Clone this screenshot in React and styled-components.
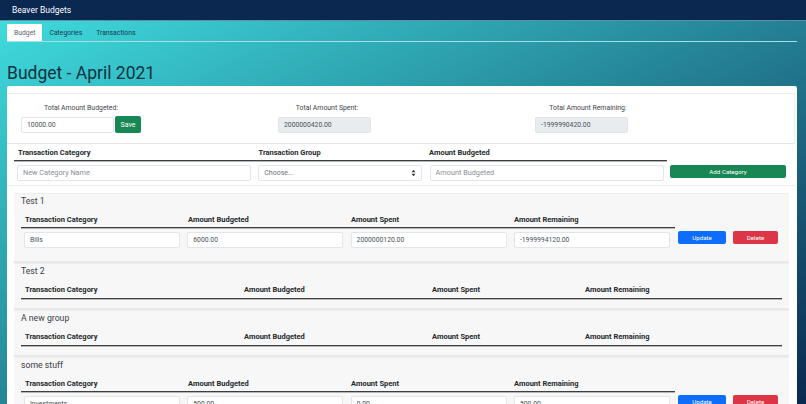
import styled, { createGlobalStyle } from "styled-components";

const GlobalStyle = createGlobalStyle`
  html, body {
    margin: 0;
    height: 100%;
    overflow: hidden;
  }
  body {
    background: linear-gradient(to bottom right, #40e0e0, #0a2850) fixed;
    font-family: Roboto, "Noto Sans", sans-serif;
    color: #212529;
  }
  * { box-sizing: border-box; }
`;

const NavBar = styled.header`
  height: 21px;
  padding: 0 12px;
  display: flex;
  align-items: center;
  background: #0a2850;
  border-bottom: 1px solid #5f8fa8;
  color: #fff;
  font-size: 8.5px;
`;

const Page = styled.main`
  padding: 3px 9px 0 7px;
`;

const Tabs = styled.nav`
  display: flex;
  height: 18px;
  border-bottom: 1px solid #a6dfe2;
`;

const Tab = styled.a`
  padding: 0 7px;
  display: flex;
  align-items: center;
  font-size: 6.8px;
  color: ${(p) => (p.$active ? "#5c636a" : "#16384f")};
  background: ${(p) => (p.$active ? "#fff" : "transparent")};
`;

const Title = styled.h1`
  margin: 19px 0 0;
  height: 25px;
  line-height: 25px;
  font-size: 17.5px;
  font-weight: 400;
  color: #10323f;
`;

const Card = styled.section`
  background: #fff;
  padding: 7px 2px 0 0;
  border-radius: 2px;
`;

const Summary = styled.div`
  height: 51px;
  padding-left: 14px;
  display: flex;
  border-top: 1px solid #eceeee;
  border-bottom: 1px solid #e6e8e8;
  border-right: 1px solid #eceeee;
`;

const Stat = styled.div`
  width: 257px;
  padding-top: 8px;
`;

const StatLabel = styled.div`
  width: ${(p) => p.$w}px;
  height: 12px;
  line-height: 12px;
  margin-bottom: 3px;
  font-size: 6.9px;
  text-align: center;
  white-space: nowrap;
  color: #3f4549;
`;

const StatRow = styled.div`
  display: flex;
  align-items: flex-start;
`;

const Field = styled.input`
  display: block;
  width: 100%;
  height: 16px;
  padding: 0 5px;
  border: 1px solid #e3e6e8;
  border-radius: 2px;
  background: ${(p) => (p.disabled ? "#e9ecef" : "#fff")};
  color: #4a5056;
  font-family: inherit;
  font-size: 6.8px;
  outline: none;
  opacity: 1;
  &::placeholder { color: #8a9096; opacity: 1; font-size: 7.3px; }
`;

const StatField = styled(Field)`
  width: 93px;
`;

const Button = styled.button`
  border: 0;
  padding: 0;
  border-radius: 2px;
  width: ${(p) => p.$w}px;
  height: 13px;
  color: #fff;
  font-family: inherit;
  font-size: 6.2px;
  background: ${(p) => p.$bg};
`;

const SaveButton = styled(Button)`
  height: 17px;
  margin-left: 1px;
  margin-top: -1px;
  font-size: 7px;
`;

const NewCategory = styled.div`
  display: grid;
  grid-template-columns: 653px 1fr;
  padding: 0 8px 0 7px;
  border-bottom: 1px solid #eceeee;
  height: 42px;
`;

const HeadRow = styled.div`
  display: grid;
  grid-template-columns: ${(p) => p.$cols};
  height: ${(p) => p.$h || 17}px;
  padding-bottom: ${(p) => (p.$h ? 1 : 0)}px;
  align-items: center;
  border-bottom: 1px solid #3c3f42;
  box-shadow: 0 1px 0 #b4b7b9;
`;

const Head = styled.div`
  padding-left: 4px;
  font-size: 7.5px;
  font-weight: 700;
  color: #24282b;
  white-space: nowrap;
`;

const InputRow = styled.div`
  display: grid;
  grid-template-columns: ${(p) => p.$cols};
  gap: 0 7.3px;
  padding: 4px 0 0 3px;
`;

const SelectBox = styled.div`
  height: 16px;
  padding: 0 5px;
  border: 1px solid #e3e6e8;
  border-radius: 2px;
  display: flex;
  align-items: center;
  justify-content: space-between;
  font-size: 7px;
  color: #6c7378;
`;

const AddButton = styled(Button)`
  margin: 21px 0 0 3px;
`;

const Group = styled.article`
  margin: 7px 7px 0;
  width: 775px;
  background: #f7f7f7;
  border-top: 1px solid #eeeeee;
  border-bottom: 2px solid #e8e8e8;
  padding: 0 7px;
  height: ${(p) => p.$h}px;
  & + & { margin-top: 0; }
`;

const GroupTitle = styled.h2`
  margin: 0;
  height: 17px;
  line-height: 15px;
  font-size: 8.7px;
  font-weight: 400;
  color: #3c4144;
`;

const CategoryGrid = styled.div`
  display: grid;
  grid-template-columns: 654px 1fr;
`;

const Actions = styled.div`
  display: flex;
  justify-content: space-between;
  width: 100px;
  margin: 20px 0 0 3px;
`;

const COLS = "163px 163px 163px 165px";
const NEW_COLS = "240.5px 170.5px 1fr";
const WIDE_COLS = "219px 188px 153px 1fr";

const CategoryHead = ({ wide }) => (
  <HeadRow $cols={wide ? WIDE_COLS : COLS} $h={wide ? 18 : undefined}>
    <Head>Transaction Category</Head>
    <Head>Amount Budgeted</Head>
    <Head>Amount Spent</Head>
    <Head>Amount Remaining</Head>
  </HeadRow>
);

const FilledGroup = ({ title, h, values }) => (
  <Group $h={h}>
    <GroupTitle>{title}</GroupTitle>
    <CategoryGrid>
      <div>
        <CategoryHead />
        <InputRow $cols="repeat(4, 156px)">
          {values.map((v) => (
            <Field key={v} defaultValue={v} />
          ))}
        </InputRow>
      </div>
      <Actions>
        <Button $bg="#0d6efd" $w={48}>Update</Button>
        <Button $bg="#dc3545" $w={45}>Delete</Button>
      </Actions>
    </CategoryGrid>
  </Group>
);

const EmptyGroup = ({ title }) => (
  <Group $h={47}>
    <GroupTitle>{title}</GroupTitle>
    <CategoryHead wide />
  </Group>
);

export default function App() {
  return (
    <>
      <GlobalStyle />
      <NavBar>Beaver Budgets</NavBar>
      <Page>
        <Tabs>
          <Tab $active>Budget</Tab>
          <Tab>Categories</Tab>
          <Tab>Transactions</Tab>
        </Tabs>
        <Title>Budget - April 2021</Title>
        <Card>
          <Summary>
            <Stat>
              <StatLabel $w={120}>Total Amount Budgeted:</StatLabel>
              <StatRow>
                <StatField defaultValue="10000.00" />
                <SaveButton $bg="#198754" $w={26}>Save</SaveButton>
              </StatRow>
            </Stat>
            <Stat>
              <StatLabel $w={98}>Total Amount Spent:</StatLabel>
              <StatField disabled defaultValue="2000000420.00" />
            </Stat>
            <Stat>
              <StatLabel $w={106}>Total Amount Remaining:</StatLabel>
              <StatField disabled defaultValue="-1999990420.00" />
            </Stat>
          </Summary>
          <NewCategory>
            <div>
              <HeadRow $cols={NEW_COLS}>
                <Head>Transaction Category</Head>
                <Head>Transaction Group</Head>
                <Head>Amount Budgeted</Head>
              </HeadRow>
              <InputRow $cols="234px 164px 234px">
                <Field placeholder="New Category Name" />
                <SelectBox>
                  Choose...
                  <svg width="5" height="8" viewBox="0 0 5 8">
                    <path d="M2.5 0.8 4.5 3.2H0.5ZM2.5 7.2 0.5 4.8H4.5Z" fill="#343a40" />
                  </svg>
                </SelectBox>
                <Field placeholder="Amount Budgeted" />
              </InputRow>
            </div>
            <AddButton $bg="#198754" $w={116}>Add Category</AddButton>
          </NewCategory>
          <FilledGroup
            title="Test 1"
            h={70}
            values={["Bills", "6000.00", "2000000120.00", "-1999994120.00"]}
          />
          <EmptyGroup title="Test 2" />
          <EmptyGroup title="A new group" />
          <FilledGroup
            title="some stuff"
            h={70}
            values={["Investments", "500.00", "0.00", "500.00"]}
          />
        </Card>
      </Page>
    </>
  );
}
